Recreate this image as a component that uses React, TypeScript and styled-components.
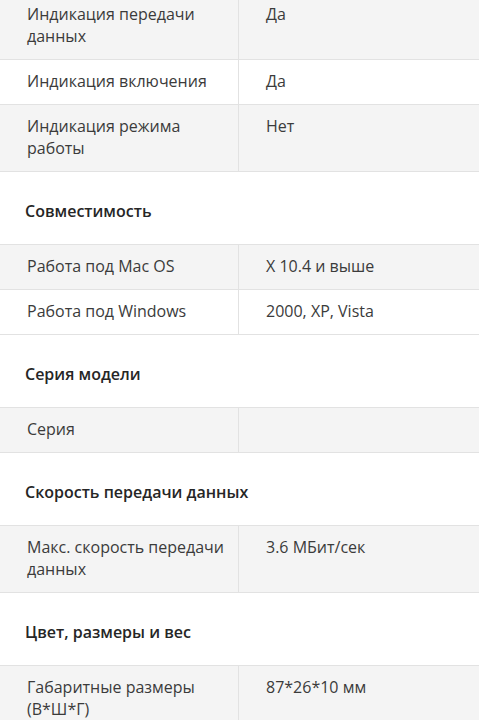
import React from 'react';
import styled, { createGlobalStyle } from 'styled-components';

const GlobalStyle = createGlobalStyle`
  html, body {
    margin: 0;
    padding: 0;
    background: #fff;
  }
  body {
    font-family: 'Open Sans', 'Noto Sans', sans-serif;
    color: #3b3b3b;
    overflow: hidden;
  }
`;

const Page = styled.div`
  width: 479px;
  margin-top: -7px;
`;

const SectionTitle = styled.h3`
  margin: 0;
  padding: 28px 25px 22px;
  font-size: 16px;
  line-height: 22px;
  font-weight: 600;
  color: #262626;
`;

const Table = styled.div<{ $noTop?: boolean }>`
  border-top: ${({ $noTop }) => ($noTop ? 'none' : '1px solid #e2e2e2')};
`;

const Row = styled.div<{ $shaded: boolean }>`
  display: grid;
  grid-template-columns: 239px 1fr;
  background: ${({ $shaded }) => ($shaded ? '#f4f4f4' : '#ffffff')};
  border-bottom: 1px solid #e2e2e2;
`;

const Cell = styled.div`
  padding: 10px 12px 12px 27px;
  font-size: 16px;
  line-height: 22px;
  min-height: 22px;
`;

const NameCell = styled(Cell)`
  border-right: 1px solid #e2e2e2;
`;

type Spec = [string, string];

type Group = {
  title?: string;
  rows: Spec[];
};

const groups: Group[] = [
  {
    rows: [
      ['Индикация передачи данных', 'Да'],
      ['Индикация включения', 'Да'],
      ['Индикация режима работы', 'Нет'],
    ],
  },
  {
    title: 'Совместимость',
    rows: [
      ['Работа под Mac OS', 'X 10.4 и выше'],
      ['Работа под Windows', '2000, XP, Vista'],
    ],
  },
  {
    title: 'Серия модели',
    rows: [['Серия', '']],
  },
  {
    title: 'Скорость передачи данных',
    rows: [['Макс. скорость передачи данных', '3.6 МБит/сек']],
  },
  {
    title: 'Цвет, размеры и вес',
    rows: [['Габаритные размеры (В*Ш*Г)', '87*26*10 мм']],
  },
];

const App = () => (
  <>
    <GlobalStyle />
    <Page>
      {groups.map((group, gi) => (
        <section key={gi}>
          {group.title && <SectionTitle>{group.title}</SectionTitle>}
          <Table $noTop={!group.title}>
            {group.rows.map(([name, value], ri) => (
              <Row key={name} $shaded={ri % 2 === 0}>
                <NameCell>{name}</NameCell>
                <Cell>{value}</Cell>
              </Row>
            ))}
          </Table>
        </section>
      ))}
    </Page>
  </>
);

export default App;
